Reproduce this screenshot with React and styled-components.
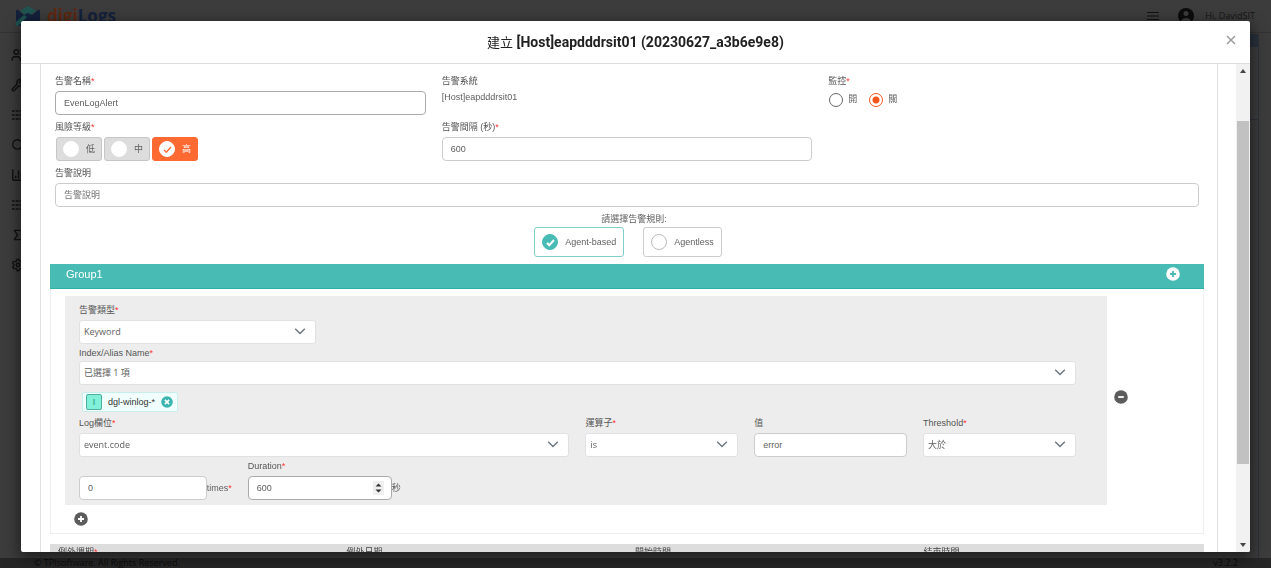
import React from 'react';
import styled, { createGlobalStyle, css } from 'styled-components';
import { ChartColumn, Search, Settings, Sigma, Users, Wrench } from 'lucide-react';

const GlobalStyle = createGlobalStyle`
  * {
    box-sizing: border-box;
  }
  body {
    margin: 0;
    background: #3c3c3c;
    color: #606060;
    font: 9px/12px "Liberation Sans", "Noto Sans CJK TC", sans-serif;
  }
  button, input, select {
    font: inherit;
    color: inherit;
  }
`

const Page = styled.div`
  height: 100vh;
  display: flex;
  flex-direction: column;
  overflow: hidden;
`

const TopBar = styled.header`
  flex: none;
  height: 33px;
  padding: 0 16px;
  display: flex;
  align-items: center;
  gap: 7px;
  border-bottom: 1px solid #323232;
`

const Brand = styled.h1`
  margin: 0 auto 0 0;
  font: bold 17px/20px "Open Sans", sans-serif;
  color: #14213c;

  span {
    color: #5e2812;
  }
`

const UserName = styled.span`
  margin-left: 4px;
  font: 9px/12px "Open Sans", sans-serif;
  color: #161616;
`

const Main = styled.div`
  flex: 1;
  min-height: 0;
  display: flex;
`

const Side = styled.nav`
  padding: 15px 11px;
  display: flex;
  flex-direction: column;
  gap: 16px;
  color: #111;
`

const Card = styled.div`
  flex: 1;
  margin: 1px 12px 0 0;
  border-right: 1px solid #2c323a;
`

const CardHead = styled.div`
  height: 13px;
  background: #29313c;
`

const CardFilter = styled.div`
  height: 73px;
  border-bottom: 1px solid #2c323a;
`

const Footer = styled.footer`
  flex: none;
  height: 10px;
  padding: 0 33px 0 34px;
  display: flex;
  justify-content: space-between;
  background: #262626;
  color: #0c0c0c;
  font: 9px/10px "Open Sans", sans-serif;
`

const Dialog = styled.section`
  position: fixed;
  inset: 21px 21px 16px;
  display: flex;
  flex-direction: column;
  background: #fff;
  border-radius: 2px;
  box-shadow: 0 4px 14px 2px rgba(0, 0, 0, 0.5);
  overflow: hidden;
`

const DialogHead = styled.header`
  flex: none;
  height: 43px;
  padding: 0 12px;
  display: grid;
  grid-template-columns: 14px 1fr 14px;
  align-items: center;
  border-bottom: 1px solid #dedede;
`

const Title = styled.h2`
  grid-column: 2;
  margin: 0;
  text-align: center;
  font: bold 14px/18px Roboto, "Noto Sans CJK TC", sans-serif;
  color: #212121;

  span {
    font-size: 13px;
    font-weight: normal;
  }
`

const PlainButton = styled.button`
  padding: 0;
  border: 0;
  background: none;
  display: flex;
  align-items: center;
  justify-content: center;
`

const CloseButton = styled(PlainButton)`
  padding-bottom: 4px;
`

const DialogBody = styled.div`
  flex: 1;
  min-height: 0;
  display: flex;
`

const Viewport = styled.div`
  flex: 1;
  padding: 0 18px 0 19px;
  overflow: hidden;
`

const Panel = styled.form`
  padding: 11px 13px 0 9px;
  border: solid #e2e2e2;
  border-width: 0 1px;
`

const ScrollBar = styled.div`
  width: 14px;
  padding: 5px 1px;
  background: #f1f1f1;
  display: flex;
  flex-direction: column;
  align-items: center;
`

const Thumb = styled.div`
  width: 12px;
  flex: 342;
  background: #c1c1c1;
`

const Space = styled.div`
  flex: ${props => props.$grow};
`

const Fields = styled.div`
  padding: 0 5px;
  display: grid;
  grid-template-columns: repeat(3, 1fr);
  gap: 6px 16px;
`

const Field = styled.div`
  min-width: 0;
  grid-column: ${props => props.$first ? '1 / ' : ''} span ${props => props.$span || 1};
`

const labelText = css`
  display: block;
  height: ${props => props.$tight ? 14 : 16}px;
  line-height: 12px;
  color: #555;
`

const Label = styled.label`
  ${labelText}
`

const Caption = styled.div`
  ${labelText}
`

const Star = styled.span`
  color: #f33;
`

const Input = styled.input`
  width: 100%;
  min-width: 0;
  height: 24px;
  padding: 0 8px;
  border: 1px solid ${props => props.$dark ? '#aaa' : '#ccc'};
  border-radius: 4px;
  background: #fff;

  &::placeholder {
    color: #777;
    opacity: 1;
  }
`

const Radios = styled.div`
  display: flex;
  gap: 11px;
`

const RadioLabel = styled.label`
  display: flex;
  align-items: center;
  gap: 4px;
`

const Radio = styled.input`
  appearance: none;
  width: 14px;
  height: 14px;
  margin: 2px 1px 0;
  border: 1px solid #666;
  border-radius: 50%;

  &:checked {
    border-color: #f0561d;
    background: radial-gradient(circle, #f0561d 3px, #fff 4px);
  }
`

const Levels = styled.div`
  display: flex;
  gap: 2px;
  padding-left: 1px;
`

const Level = styled.label`
  width: 46px;
  height: 24px;
  padding: 0 6px;
  display: flex;
  align-items: center;
  justify-content: space-between;
  border: 1px solid #c6c6c6;
  border-radius: 3px;
  background: #ddd;

  &:has(:checked) {
    border-color: #ff6a33;
    background: #ff6a33;
    color: #fff;
  }
`

const Dot = styled.span`
  width: 16px;
  height: 16px;
  display: grid;
  place-items: center;
  border: 1px solid ${props => props.$line || '#fff'};
  border-radius: 50%;
  background: ${props => props.$fill || '#fff'};
  color: ${props => props.$tick || '#ff6a33'};

  > * {
    grid-area: 1 / 1;
  }
`

const HiddenRadio = styled.input`
  appearance: none;
  width: 13px;
  height: 13px;
  margin: 0;
`

const RuleTitle = styled.div`
  margin-top: 6px;
  padding-left: 14px;
  text-align: center;
`

const Rules = styled.div`
  margin: 2px 0 7px;
  padding-left: 2px;
  display: flex;
  justify-content: center;
  gap: 19px;
`

const Rule = styled.label`
  height: 30px;
  padding: 0 7px;
  display: flex;
  align-items: center;
  gap: 7px;
  border: 1px solid #ccc;
  border-radius: 3px;

  &:has(:checked) {
    border-color: #7fd0c9;
  }
`

const GroupHead = styled.div`
  height: 25px;
  padding: 0 24px 4px 16px;
  display: flex;
  align-items: center;
  justify-content: space-between;
  background: #47bbb4;
  border-bottom: 1px solid #2fb0a8;
  color: #fff;
  font-size: 11px;
`

const GroupBody = styled.div`
  padding: 7px 14px;
  border: 1px solid #eee;
  border-top: 0;
`

const Condition = styled.div`
  display: flex;
  align-items: center;
  gap: 7px;
`

const RemoveButton = styled(PlainButton)`
  padding-bottom: 8px;
`

const ConditionFields = styled.div`
  width: 92.7%;
  padding: 8px 31px 5px 14px;
  display: grid;
  grid-template-columns: repeat(12, 1fr);
  gap: 3px 16px;
  background: #ededed;
`

const SelectBox = styled.div`
  position: relative;

  svg {
    position: absolute;
    top: 7px;
    right: 10px;
    pointer-events: none;
  }
`

const Select = styled.select`
  appearance: none;
  width: 100%;
  height: 24px;
  padding: 0 4px;
  border: 1px solid #dfe1e5;
  border-radius: 3px;
  background: #fff;
  font-family: "Open Sans", "Noto Sans CJK TC", sans-serif;
`

const Tag = styled.span`
  width: 96px;
  height: 20px;
  margin: 7px 0 2px 3px;
  padding: 0 4px 0 3px;
  display: flex;
  align-items: center;
  justify-content: space-between;
  border: 1px solid #c9efec;
  border-radius: 2px;
  background: #f0fffd;
  color: #333;
`

const TagType = styled.span`
  width: 16px;
  height: 16px;
  line-height: 14px;
  border: 1px solid #4fae9f;
  border-radius: 2px;
  background: #80f0d8;
  color: #298a7d;
  text-align: center;
`

const Inline = styled.div`
  display: flex;
  align-items: center;
  white-space: nowrap;
`

const NumberBox = styled.div`
  position: relative;
  flex: 1;
  min-width: 0;
  display: flex;

  input {
    appearance: textfield;
  }
`

const Spinner = styled.span`
  position: absolute;
  top: 5px;
  right: 8px;
  width: 11px;
  height: 14px;
  display: flex;
  align-items: center;
  justify-content: center;
  background: #efefef;
`

const AddRow = styled.div`
  padding: 7px 9px 0;
`

const Table = styled.table`
  width: 100%;
  margin-top: 10px;
  table-layout: fixed;
  border-collapse: collapse;
  background: #ddd;

  th {
    height: 24px;
    padding: 2px 8px;
    vertical-align: top;
    text-align: left;
    font-weight: normal;
    color: #444;
  }
`

const Tick = ({ width = 2 }) => (
  <svg width="11" height="11" viewBox="0 0 11 11" fill="none" stroke="currentColor" strokeWidth={width}>
    <path d="M2 6 4.3 8.2 9 3" />
  </svg>
)

const Chevron = () => (
  <svg width="12" height="9" viewBox="0 0 12 9" fill="none" stroke="#6b747d" strokeWidth="1.4">
    <path d="M1.2 1.8 6 6.6 10.8 1.8" />
  </svg>
)

const RoundIcon = ({ shape, fill, stroke, size = 14 }) => (
  <svg width={size} height={size} viewBox="0 0 14 14">
    <circle cx="7" cy="7" r="6.8" fill={fill} />
    <path d={shape} stroke={stroke} strokeWidth="1.8" />
  </svg>
)

const GridRows = ({ size }) => (
  <svg width={size} height={size} viewBox="0 0 14 14" fill="none" stroke="currentColor" strokeWidth="1.6">
    <path d="M1 3h2.600m1 0h3m1 0h3M1 7h2.600m1 0h3m1 0h3M1 11h2.600m1 0h3m1 0h3" />
  </svg>
)

const PLUS = 'M4 7h6M7 4v6'
const MINUS = 'M4.2 7h5.6'
const CROSS = 'M4.5 4.5l5 5M9.5 4.5l-5 5'

const sideIcons = [Users, Wrench, GridRows, Search, ChartColumn, GridRows, Sigma, Settings]

const SelectField = ({ id, label, value, span, first, tight }) => (
  <Field $span={span} $first={first}>
    <Label htmlFor={id} $tight={tight}>{label}<Star>*</Star></Label>
    <SelectBox>
      <Select id={id}><option>{value}</option></Select>
      <Chevron />
    </SelectBox>
  </Field>
)

const App = () => (
  <>
    <GlobalStyle />
    <Page>
      <TopBar>
        <svg width="24" height="20" viewBox="0 0 24 20">
          <path d="M4 5 10 1q2-1 4 0l6 4-8 6z" fill="#1f5450" />
          <path d="M0 5q0-2 2-1l6 5 4-2 4 2 6-5q2-1 2 1v15H0z" fill="#14213c" />
          <path d="M0 20V16L8 9l3 2L2 20z" fill="#1f5450" />
        </svg>
        <Brand><span>digi</span>Logs</Brand>
        <svg width="12" height="10" viewBox="0 0 12 10" stroke="#111" strokeWidth="1.2">
          <path d="M0 1.500h12M0 5h12M0 8.500h12" />
        </svg>
        <svg width="28" height="16" viewBox="-9 0 28 16">
          <circle cx="11" cy="8" r="8" fill="#0c0c0c" />
          <circle cx="11" cy="5.500" r="2.500" fill="#3c3c3c" />
          <path d="M6 13c1-4 9-4 10 0z" fill="#3c3c3c" />
        </svg>
        <UserName>Hi, DavidSIT</UserName>
      </TopBar>
      <Main>
        <Side>
          {sideIcons.map((Icon, index) => <Icon key={index} size={14} strokeWidth={2.4} />)}
        </Side>
        <Card>
          <CardHead />
          <CardFilter />
        </Card>
      </Main>
      <Footer>
        <span>© TPIsoftware. All Rights Reserved.</span>
        <span>v3.2.2</span>
      </Footer>
    </Page>

    <Dialog role="dialog" aria-labelledby="dialog-title">
      <DialogHead>
        <Title id="dialog-title"><span>建立</span> [Host]eapdddrsit01 (20230627_a3b6e9e8)</Title>
        <CloseButton type="button" aria-label="Close">
          <svg width="10" height="10" viewBox="0 0 10 10" stroke="#999" strokeWidth="1.4">
            <path d="M1 1l8 8M9 1l-8 8" />
          </svg>
        </CloseButton>
      </DialogHead>
      <DialogBody>
        <Viewport>
          <Panel>
            <Fields>
              <Field>
                <Label htmlFor="name">告警名稱<Star>*</Star></Label>
                <Input id="name" defaultValue="EvenLogAlert" $dark />
              </Field>
              <Field>
                <Caption>告警系統</Caption>
                <div>[Host]eapdddrsit01</div>
              </Field>
              <Field>
                <Caption>監控<Star>*</Star></Caption>
                <Radios>
                  <RadioLabel><Radio type="radio" name="monitor" />開</RadioLabel>
                  <RadioLabel><Radio type="radio" name="monitor" defaultChecked />關</RadioLabel>
                </Radios>
              </Field>
              <Field $first>
                <Caption>風險等級<Star>*</Star></Caption>
                <Levels>
                  <Level><Dot><HiddenRadio type="radio" name="level" /></Dot>低</Level>
                  <Level><Dot><HiddenRadio type="radio" name="level" /></Dot>中</Level>
                  <Level><Dot><HiddenRadio type="radio" name="level" defaultChecked /><Tick width={1.4} /></Dot>高</Level>
                </Levels>
              </Field>
              <Field>
                <Label htmlFor="interval">告警間隔 (秒)<Star>*</Star></Label>
                <Input id="interval" defaultValue="600" />
              </Field>
              <Field $first $span={3}>
                <Label htmlFor="note">告警說明</Label>
                <Input id="note" placeholder="告警說明" />
              </Field>
            </Fields>
            <RuleTitle>請選擇告警規則:</RuleTitle>
            <Rules>
              <Rule>
                <Dot $line="#47bbb4" $fill="#47bbb4" $tick="#fff">
                  <HiddenRadio type="radio" name="rule" defaultChecked /><Tick />
                </Dot>
                Agent-based
              </Rule>
              <Rule>
                <Dot $line="#bbb"><HiddenRadio type="radio" name="rule" /></Dot>
                Agentless
              </Rule>
            </Rules>

            <GroupHead>
              Group1
              <PlainButton type="button" aria-label="Add group">
                <RoundIcon shape={PLUS} fill="#fff" stroke="#47bbb4" />
              </PlainButton>
            </GroupHead>
            <GroupBody>
              <Condition>
                <ConditionFields>
                  <SelectField id="type" label="告警類型" value="Keyword" span={3} />
                  <Field $first $span={12}>
                    <SelectField id="index" label="Index/Alias Name" value="已選擇 1 項" tight />
                    <Tag>
                      <TagType>I</TagType>
                      dgl-winlog-*
                      <PlainButton type="button" aria-label="Remove">
                        <RoundIcon shape={CROSS} fill="#3bb5ae" stroke="#fff" size={12} />
                      </PlainButton>
                    </Tag>
                  </Field>
                  <SelectField id="log" label="Log欄位" value="event.code" span={6} />
                  <SelectField id="operator" label="運算子" value="is" span={2} />
                  <Field $span={2}>
                    <Label htmlFor="value">值</Label>
                    <Input id="value" defaultValue="error" />
                  </Field>
                  <SelectField id="threshold" label="Threshold" value="大於" span={2} />
                  <Field $first $span={2}>
                    <Caption />
                    <Inline>
                      <Input id="times" defaultValue="0" />
                      <label htmlFor="times">times<Star>*</Star></label>
                    </Inline>
                  </Field>
                  <Field $span={2}>
                    <Label htmlFor="duration">Duration<Star>*</Star></Label>
                    <Inline>
                      <NumberBox>
                        <Input id="duration" type="number" defaultValue="600" $dark />
                        <Spinner>
                          <svg width="7" height="10" viewBox="0 0 7 10" fill="#333">
                            <path d="M.5 3.500h6l-3-3zM.5 6.500h6l-3 3z" />
                          </svg>
                        </Spinner>
                      </NumberBox>
                      秒
                    </Inline>
                  </Field>
                </ConditionFields>
                <RemoveButton type="button" aria-label="Remove condition">
                  <RoundIcon shape={MINUS} fill="#5c5c5c" stroke="#fff" />
                </RemoveButton>
              </Condition>
              <AddRow>
                <PlainButton type="button" aria-label="Add condition">
                  <RoundIcon shape={PLUS} fill="#5c5c5c" stroke="#fff" />
                </PlainButton>
              </AddRow>
            </GroupBody>
            <Table>
              <thead>
                <tr>
                  <th>例外週期<Star>*</Star></th>
                  <th>例外日期</th>
                  <th>開始時間</th>
                  <th>結束時間</th>
                </tr>
              </thead>
            </Table>
          </Panel>
        </Viewport>
        <ScrollBar aria-hidden="true">
          <svg width="6" height="4" viewBox="0 0 6 4"><path d="M0 4h6L3 0z" fill="#444" /></svg>
          <Space $grow={48} />
          <Thumb />
          <Space $grow={79} />
          <svg width="6" height="4" viewBox="0 0 6 4"><path d="M0 0h6L3 4z" fill="#444" /></svg>
        </ScrollBar>
      </DialogBody>
    </Dialog>
  </>
)


export default App;
